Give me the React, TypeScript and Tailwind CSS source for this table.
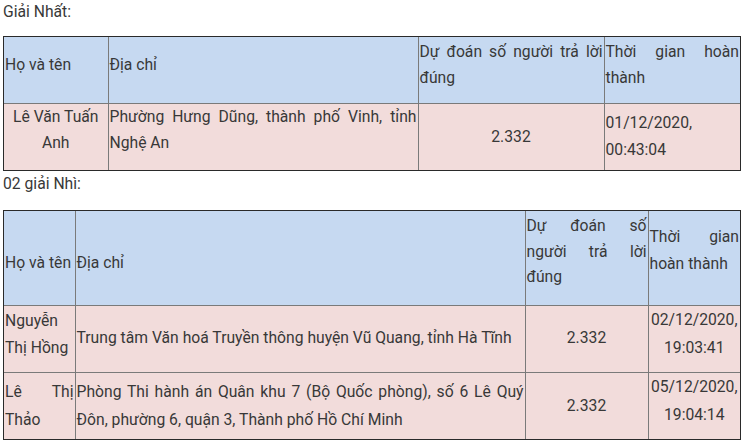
import React from "react";

const cell = "border-l border-t border-[#7a7a7a] first:border-l-0 px-[1px] align-middle";

export default function App() {
  return (
    <div
      className="w-[746px] h-[443px] overflow-hidden bg-white pl-[3px] text-[15.7px] leading-[26.5px] text-[#383838]"
      style={{ fontFamily: "Roboto, 'Noto Sans', sans-serif" }}
    >
      <p className="leading-[24px] mb-[12px]">Giải Nhất:</p>

      <div className="w-[738px] border border-[#2a2a2a]">
        <table className="w-full table-fixed border-collapse [&_tr:first-child>td]:border-t-0">
          <colgroup>
            <col className="w-[104px]" />
            <col className="w-[310px]" />
            <col className="w-[186px]" />
            <col className="w-[136px]" />
          </colgroup>
          <tbody>
            <tr className="h-[66px] bg-[#c6d9f1]">
              <td className={`${cell} pb-[9px]`}>Họ và tên</td>
              <td className={`${cell} pb-[9px]`}>Địa chỉ</td>
              <td className={`${cell} pb-[9px] text-justify`}>Dự đoán số người trả lời đúng</td>
              <td className={`${cell} pb-[9px] text-justify`}>Thời gian hoàn thành</td>
            </tr>
            <tr className="h-[67px] bg-[#f2dcdb]">
              <td className={`${cell} pb-[13px] text-center`}>Lê Văn Tuấn Anh</td>
              <td className={`${cell} pb-[13px] text-justify`}>
                Phường Hưng Dũng, thành phố Vinh, tỉnh Nghệ An
              </td>
              <td className={`${cell} text-center`}>2.332</td>
              <td className={`${cell}`}>01/12/2020, 00:43:04</td>
            </tr>
          </tbody>
        </table>
      </div>

      <p className="leading-[24px] mb-[14px] mt-[1px]">02 giải Nhì:</p>

      <div className="w-[738px] border border-[#2a2a2a]">
        <table className="w-full table-fixed border-collapse [&_tr:first-child>td]:border-t-0">
          <colgroup>
            <col className="w-[71px]" />
            <col className="w-[450px]" />
            <col className="w-[123px]" />
            <col className="w-[92px]" />
          </colgroup>
          <tbody>
            <tr className="h-[94px] bg-[#c6d9f1]">
              <td className={`${cell} pt-[10px]`}>Họ và tên</td>
              <td className={`${cell} pt-[10px]`}>Địa chỉ</td>
              <td className={`${cell} !align-top pt-[2px] leading-[25.5px] text-justify`}>
                Dự đoán số người trả lời đúng
              </td>
              <td className={`${cell} pb-[14px] text-justify`}>Thời gian hoàn thành</td>
            </tr>
            <tr className="h-[67px] bg-[#f2dcdb]">
              <td className={`${cell} pb-[9px] leading-[27px]`}>Nguyễn Thị Hồng</td>
              <td className={`${cell}`}>
                Trung tâm Văn hoá Truyền thông huyện Vũ Quang, tỉnh Hà Tĩnh
              </td>
              <td className={`${cell} text-center`}>2.332</td>
              <td className={`${cell} !align-top leading-[28px] text-center`}>
                02/12/2020, 19:03:41
              </td>
            </tr>
            <tr className="h-[67px] bg-[#f2dcdb]">
              <td className={`${cell} leading-[27.5px] text-justify`}>Lê Thị Thảo</td>
              <td className={`${cell} leading-[27.5px] text-justify`}>
                Phòng Thi hành án Quân khu 7 (Bộ Quốc phòng), số 6 Lê Quý Đôn, phường 6, quận 3,
                Thành phố Hồ Chí Minh
              </td>
              <td className={`${cell} text-center`}>2.332</td>
              <td className={`${cell} !align-top leading-[28px] text-center`}>
                05/12/2020, 19:04:14
              </td>
            </tr>
          </tbody>
        </table>
      </div>
    </div>
  );
}
